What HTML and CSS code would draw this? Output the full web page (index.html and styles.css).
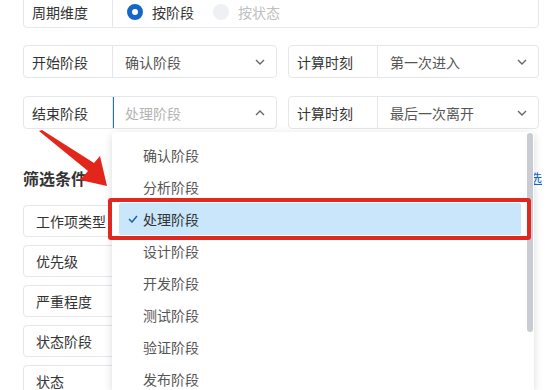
FILE: index.html
```html
<!doctype html>
<html>
    <head>
        <title>统计设置</title>
        <link rel="stylesheet" href="styles.css">
    </head>
    <body>
        <main class="form">
            <div class="row">
                <div class="field full">
                    <span class="label">周期维度</span>
                    <div class="radios">
                        <label class="radio checked"><span class="dot"></span>按阶段</label>
                        <label class="radio disabled"><span class="dot"></span>按状态</label>
                    </div>
                </div>
            </div>
            <div class="row">
                <div class="field">
                    <span class="label">开始阶段</span>
                    <div class="select"><span class="value">确认阶段</span><svg class="chev" viewBox="0 0 10 6"><path d="M1 1l4 4 4-4"/></svg></div>
                </div>
                <div class="field">
                    <span class="label">计算时刻</span>
                    <div class="select"><span class="value">第一次进入</span><svg class="chev" viewBox="0 0 10 6"><path d="M1 1l4 4 4-4"/></svg></div>
                </div>
            </div>
            <div class="row">
                <div class="field">
                    <span class="label">结束阶段</span>
                    <div class="select focused"><span class="placeholder">处理阶段</span><svg class="chev" viewBox="0 0 10 6"><path d="M1 5l4-4 4 4"/></svg></div>
                </div>
                <div class="field">
                    <span class="label">计算时刻</span>
                    <div class="select"><span class="value">最后一次离开</span><svg class="chev" viewBox="0 0 10 6"><path d="M1 1l4 4 4-4"/></svg></div>
                </div>
            </div>
            <h3 class="section-title"><span>筛选条件</span><a class="link">更多筛选</a></h3>
            <div class="filters">
                <div class="filter">工作项类型</div>
                <div class="filter">优先级</div>
                <div class="filter">严重程度</div>
                <div class="filter">状态阶段</div>
                <div class="filter">状态</div>
            </div>
        </main>

        <div class="dropdown">
            <ul class="options">
                <li>确认阶段</li>
                <li>分析阶段</li>
                <li class="selected"><svg class="check" viewBox="0 0 10 8"><path d="M1 4l3 3 5-6"/></svg>处理阶段</li>
                <li>设计阶段</li>
                <li>开发阶段</li>
                <li>测试阶段</li>
                <li>验证阶段</li>
                <li>发布阶段</li>
            </ul>
            <div class="scrollbar"></div>
        </div>

        <div class="mark"></div>
        <svg class="arrow" viewBox="0 0 550 390">
            <polygon points="39,131 42,130 94,163 100,156 107,186 80,180 88,171"/>
        </svg>
    </body>
</html>
```

FILE: styles.css
```css
html {
    background: #fff;
    font-family: "Noto Sans CJK SC", "Noto Sans", sans-serif;
    font-size: 14px;
    color: #333;
}
body {
    margin: 0;
    height: 390px;
    overflow: hidden;
    position: relative;
}
.form {
    padding-left: 23px;
    margin-top: -5px;
    width: 516px;
}
.row {
    display: flex;
    gap: 11px;
    margin-bottom: 17px;
}
.row + .row + .row {
    margin-top: 18px;
    margin-bottom: 0;
}
.field {
    display: flex;
    height: 33px;
    width: 254px;
    box-sizing: border-box;
    border: 1px solid #e4e7ec;
    border-radius: 4px;
    align-items: stretch;
}
.field + .field {
    width: 251px;
}
.field.full {
    width: 516px;
}
.label {
    width: 89px;
    flex: none;
    box-sizing: border-box;
    border-right: 1px solid #e4e7ec;
    padding-left: 8px;
    display: flex;
    align-items: center;
    color: #333;
}
.select {
    flex: 1;
    display: flex;
    align-items: center;
    justify-content: space-between;
    padding: 0 12px;
    color: #555;
}
.select.focused {
    box-shadow: inset 1px 0 0 #1e6fd9;
}
.placeholder {
    color: #b3b3b3;
}
.chev {
    width: 10px;
    height: 6px;
    fill: none;
    stroke: #666;
    stroke-width: 1.4;
    margin-right: -1px;
}
.radios {
    display: flex;
    align-items: center;
    padding-left: 14px;
    gap: 19px;
}
.radio {
    display: flex;
    align-items: center;
    gap: 9px;
}
.radio .dot {
    width: 16px;
    height: 16px;
    box-sizing: border-box;
    border-radius: 50%;
}
.radio.checked .dot {
    border: 5px solid #1467c8;
}
.radio.disabled {
    color: #c0c0c0;
}
.radio.disabled .dot {
    background: #eef0f4;
}
.section-title {
    margin: 37px 0 15px;
    font-size: 16px;
    line-height: 24px;
    font-weight: bold;
    color: #333;
    display: flex;
    justify-content: space-between;
    width: 519px;
}
.link {
    font-size: 13px;
    font-weight: normal;
    color: #1467c8;
    text-decoration: underline;
}
.filters {
    display: flex;
    flex-direction: column;
    gap: 8px;
}
.filter {
    height: 32px;
    width: 254px;
    box-sizing: border-box;
    border: 1px solid #e4e7ec;
    border-radius: 4px;
    padding-left: 12px;
    display: flex;
    align-items: center;
    color: #333;
}
.dropdown {
    position: absolute;
    left: 112px;
    top: 132px;
    width: 422px;
    height: 258px;
    background: #fff;
    box-shadow: 0 2px 8px rgba(0, 0, 0, 0.15);
    border-radius: 4px 4px 0 0;
    overflow: hidden;
}
.options {
    list-style: none;
    margin: 0;
    padding: 7px 0 0;
}
.options li {
    height: 32px;
    margin: 0 13px 0 7px;
    padding-left: 24px;
    display: flex;
    align-items: center;
    color: #555;
    border-radius: 2px;
    position: relative;
}
.options li.selected {
    background: #c9e6fb;
    color: #333;
}
.check {
    position: absolute;
    left: 9px;
    width: 10px;
    height: 8px;
    fill: none;
    stroke: #1e5fb8;
    stroke-width: 1.5;
}
.scrollbar {
    position: absolute;
    right: 1px;
    top: 1px;
    width: 6px;
    height: 199px;
    background: #c9ccd2;
    border-radius: 3px;
}
.mark {
    position: absolute;
    left: 108px;
    top: 198px;
    width: 423px;
    height: 42px;
    box-sizing: border-box;
    border: 4px solid #e0281f;
    border-radius: 3px;
}
.arrow {
    position: absolute;
    left: 0;
    top: 0;
    width: 550px;
    height: 390px;
    fill: #e3261c;
    pointer-events: none;
}
```
